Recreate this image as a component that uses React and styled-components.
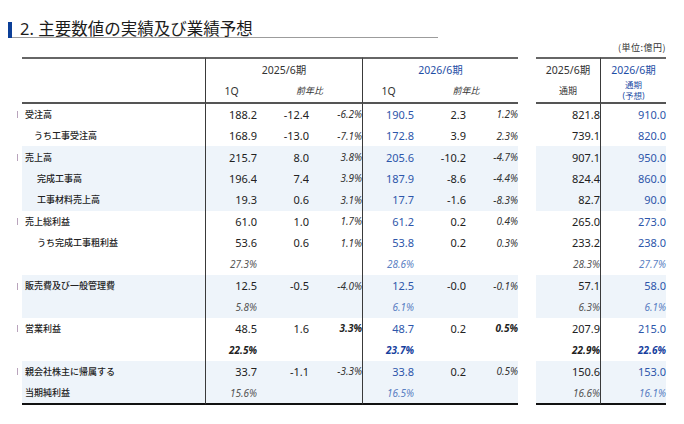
import styled, { createGlobalStyle } from "styled-components"

const GlobalStyle = createGlobalStyle`
  html, body { margin: 0; padding: 0; background: #fff; }
  body { font-family: "Noto Sans", "Noto Sans CJK JP", sans-serif; color: #222; }
`

// marker | label | 2025 1Q, diff, pct | 2026 1Q, diff, pct | gap | FY25 | FY26
const COLS = "14px 183px 52px 52px 53px 52px 52px 52px 18px 64px 66px"

const Page = styled.div`
  width: 684px;
  height: 424px;
  padding: 20px 0 0 8px;
  box-sizing: border-box;
`

const TitleRow = styled.div`
  display: flex;
  align-items: flex-end;
`

const TitleBar = styled.span`
  width: 4px;
  height: 16px;
  background: #0c3f98;
`

const Heading = styled.h2`
  margin: 0;
  width: 418px;
  height: 17px;
  padding-left: 8px;
  box-sizing: content-box;
  border-bottom: 1px solid #9c9c9c;
  font-family: "Noto Sans", "Noto Sans CJK JP", sans-serif;
  font-size: 16.5px;
  font-weight: 400;
  line-height: 17px;
  color: #1c1c1c;
`

const Unit = styled.div`
  width: 658px;
  margin-top: 4px;
  text-align: right;
  font-family: "Noto Sans CJK JP", sans-serif;
  font-size: 9px;
  line-height: 12px;
  letter-spacing: 0.5px;
  color: #333;
`

const Table = styled.div`
  margin-top: 3px;
  width: 658px;
`

const Row = styled.div`
  display: grid;
  grid-template-columns: ${COLS};
  height: ${(p) => p.$h}px;
`

const Marker = styled.div`
  position: relative;
  &::after {
    content: "";
    display: ${(p) => (p.$on ? "block" : "none")};
    position: absolute;
    left: 8.5px;
    top: 50%;
    width: 1.2px;
    height: 7px;
    margin-top: -3px;
    background: #b9a4bc;
  }
`

const Gap = styled.div``

const HeadCell = styled.div`
  grid-column: ${(p) => (p.$span ? `span ${p.$span}` : "auto")};
  display: flex;
  flex-direction: column;
  align-items: center;
  justify-content: center;
  text-align: center;
  box-sizing: border-box;
  border-top: ${(p) => (p.$top ? "2px solid #666" : "none")};
  border-bottom: ${(p) => (p.$bottom ? "2px solid #555" : "none")};
  border-left: ${(p) => (p.$rule ? "1.5px solid #3a3a3a" : "none")};
  font-family: "Noto Sans", "Noto Sans CJK JP", sans-serif;
  font-size: ${(p) => (p.$small ? "9px" : "10.5px")};
  font-style: ${(p) => (p.$italic ? "italic" : "normal")};
  line-height: 12px;
  color: ${(p) => (p.$blue ? "#1e4ea5" : "#333")};
`

const HeadLine = styled.span`
  display: block;
  line-height: 10.5px;
  font-size: 8.5px;
`

const Label = styled.div`
  display: flex;
  align-items: center;
  padding-left: ${(p) => 3 + p.$indent}px;
  box-sizing: border-box;
  background: ${(p) => (p.$shade ? "#eef4fa" : "transparent")};
  border-bottom: ${(p) => (p.$last ? "2px solid #111" : "none")};
  font-family: "Noto Sans CJK JP", sans-serif;
  font-size: 9px;
  font-weight: 500;
  color: #222;
  white-space: nowrap;
`

const toneColor = {
  dark: "#222",
  pct: "#333",
  grey: "#555",
  blue: "#2d56aa",
  lightBlue: "#5a7fc3",
  boldBlue: "#173f9e",
}

const Cell = styled.div`
  display: flex;
  align-items: center;
  justify-content: flex-end;
  box-sizing: border-box;
  background: ${(p) => (p.$shade ? "#eef4fa" : "transparent")};
  border-left: ${(p) => (p.$rule ? "1.5px solid #3a3a3a" : "none")};
  border-bottom: ${(p) => (p.$last ? "2px solid #111" : "none")};
  font-family: "Noto Sans", sans-serif;
  font-size: ${(p) => (p.$kind === "num" ? "11px" : "10px")};
  font-style: ${(p) => (p.$kind === "num" ? "normal" : "italic")};
  font-weight: ${(p) => (p.$strong ? 700 : 400)};
  color: ${(p) => toneColor[p.$tone]};
  white-space: nowrap;
`

const rows = [
  { label: "受注高", marker: true, indent: 0, v: ["188.2", "-12.4", "-6.2%", "190.5", "2.3", "1.2%", "821.8", "910.0"] },
  { label: "うち工事受注高", indent: 9, v: ["168.9", "-13.0", "-7.1%", "172.8", "3.9", "2.3%", "739.1", "820.0"] },
  { label: "売上高", marker: true, indent: 0, shade: true, v: ["215.7", "8.0", "3.8%", "205.6", "-10.2", "-4.7%", "907.1", "950.0"] },
  { label: "完成工事高", indent: 12, shade: true, v: ["196.4", "7.4", "3.9%", "187.9", "-8.6", "-4.4%", "824.4", "860.0"] },
  { label: "工事材料売上高", indent: 12, shade: true, v: ["19.3", "0.6", "3.1%", "17.7", "-1.6", "-8.3%", "82.7", "90.0"] },
  { label: "売上総利益", marker: true, indent: 0, v: ["61.0", "1.0", "1.7%", "61.2", "0.2", "0.4%", "265.0", "273.0"] },
  { label: "うち完成工事粗利益", indent: 12, v: ["53.6", "0.6", "1.1%", "53.8", "0.2", "0.3%", "233.2", "238.0"] },
  { label: "", ratio: true, indent: 0, v: ["27.3%", "", "", "28.6%", "", "", "28.3%", "27.7%"] },
  { label: "販売費及び一般管理費", marker: true, indent: 0, shade: true, v: ["12.5", "-0.5", "-4.0%", "12.5", "-0.0", "-0.1%", "57.1", "58.0"] },
  { label: "", ratio: true, indent: 0, shade: true, v: ["5.8%", "", "", "6.1%", "", "", "6.3%", "6.1%"] },
  { label: "営業利益", marker: true, indent: 0, strong: true, v: ["48.5", "1.6", "3.3%", "48.7", "0.2", "0.5%", "207.9", "215.0"] },
  { label: "", ratio: true, indent: 0, strong: true, v: ["22.5%", "", "", "23.7%", "", "", "22.9%", "22.6%"] },
  { label: "親会社株主に帰属する", marker: true, indent: 0, shade: true, v: ["33.7", "-1.1", "-3.3%", "33.8", "0.2", "0.5%", "150.6", "153.0"] },
  { label: "当期純利益", ratio: true, indent: 0, shade: true, v: ["15.6%", "", "", "16.5%", "", "", "16.6%", "16.1%"] },
]

const RULES = [0, 3, 7]
const BLUE = [3, 7]

const cellProps = (row, i) => {
  const blue = BLUE.includes(i)
  if (row.ratio) {
    let tone = blue ? "lightBlue" : "grey"
    if (row.strong) tone = blue ? "boldBlue" : "dark"
    return { $kind: "ratio", $tone: tone, $strong: row.strong }
  }
  if (i === 2 || i === 5) return { $kind: "pct", $tone: row.strong ? "dark" : "pct", $strong: row.strong }
  return { $kind: "num", $tone: blue ? "blue" : "dark" }
}

const BodyRow = ({ row, last }) => {
  const cells = row.v.map((val, i) => (
    <Cell key={i} $rule={RULES.includes(i)} $shade={row.shade} $last={last} {...cellProps(row, i)}>
      {val}
    </Cell>
  ))
  return (
    <Row $h={last ? 23.43 : 21.43}>
      <Marker $on={row.marker} />
      <Label $indent={row.indent} $shade={row.shade} $last={last}>{row.label}</Label>
      {cells.slice(0, 6)}
      <Gap />
      {cells.slice(6)}
    </Row>
  )
}

const App = () => {
  return (
    <Page>
      <GlobalStyle />
      <TitleRow>
        <TitleBar />
        <Heading>2. 主要数値の実績及び業績予想</Heading>
      </TitleRow>
      <Unit>(単位:億円)</Unit>
      <Table>
        <Row $h={23}>
          <Marker />
          <HeadCell $top />
          <HeadCell $top $rule $span={3}>2025/6期</HeadCell>
          <HeadCell $top $rule $span={3} $blue>2026/6期</HeadCell>
          <Gap />
          <HeadCell $top>2025/6期</HeadCell>
          <HeadCell $top $rule $blue>2026/6期</HeadCell>
        </Row>
        <Row $h={23.5}>
          <Marker />
          <HeadCell $bottom />
          <HeadCell $bottom $rule>1Q</HeadCell>
          <HeadCell $bottom $span={2} $small $italic>前年比</HeadCell>
          <HeadCell $bottom $rule>1Q</HeadCell>
          <HeadCell $bottom $span={2} $small $italic>前年比</HeadCell>
          <Gap />
          <HeadCell $bottom $small>通期</HeadCell>
          <HeadCell $bottom $rule $small $blue>
            <HeadLine>通期</HeadLine>
            <HeadLine>(予想)</HeadLine>
          </HeadCell>
        </Row>
        {rows.map((row, i) => (
          <BodyRow key={i} row={row} last={i === rows.length - 1} />
        ))}
      </Table>
    </Page>
  )
}

export default App
